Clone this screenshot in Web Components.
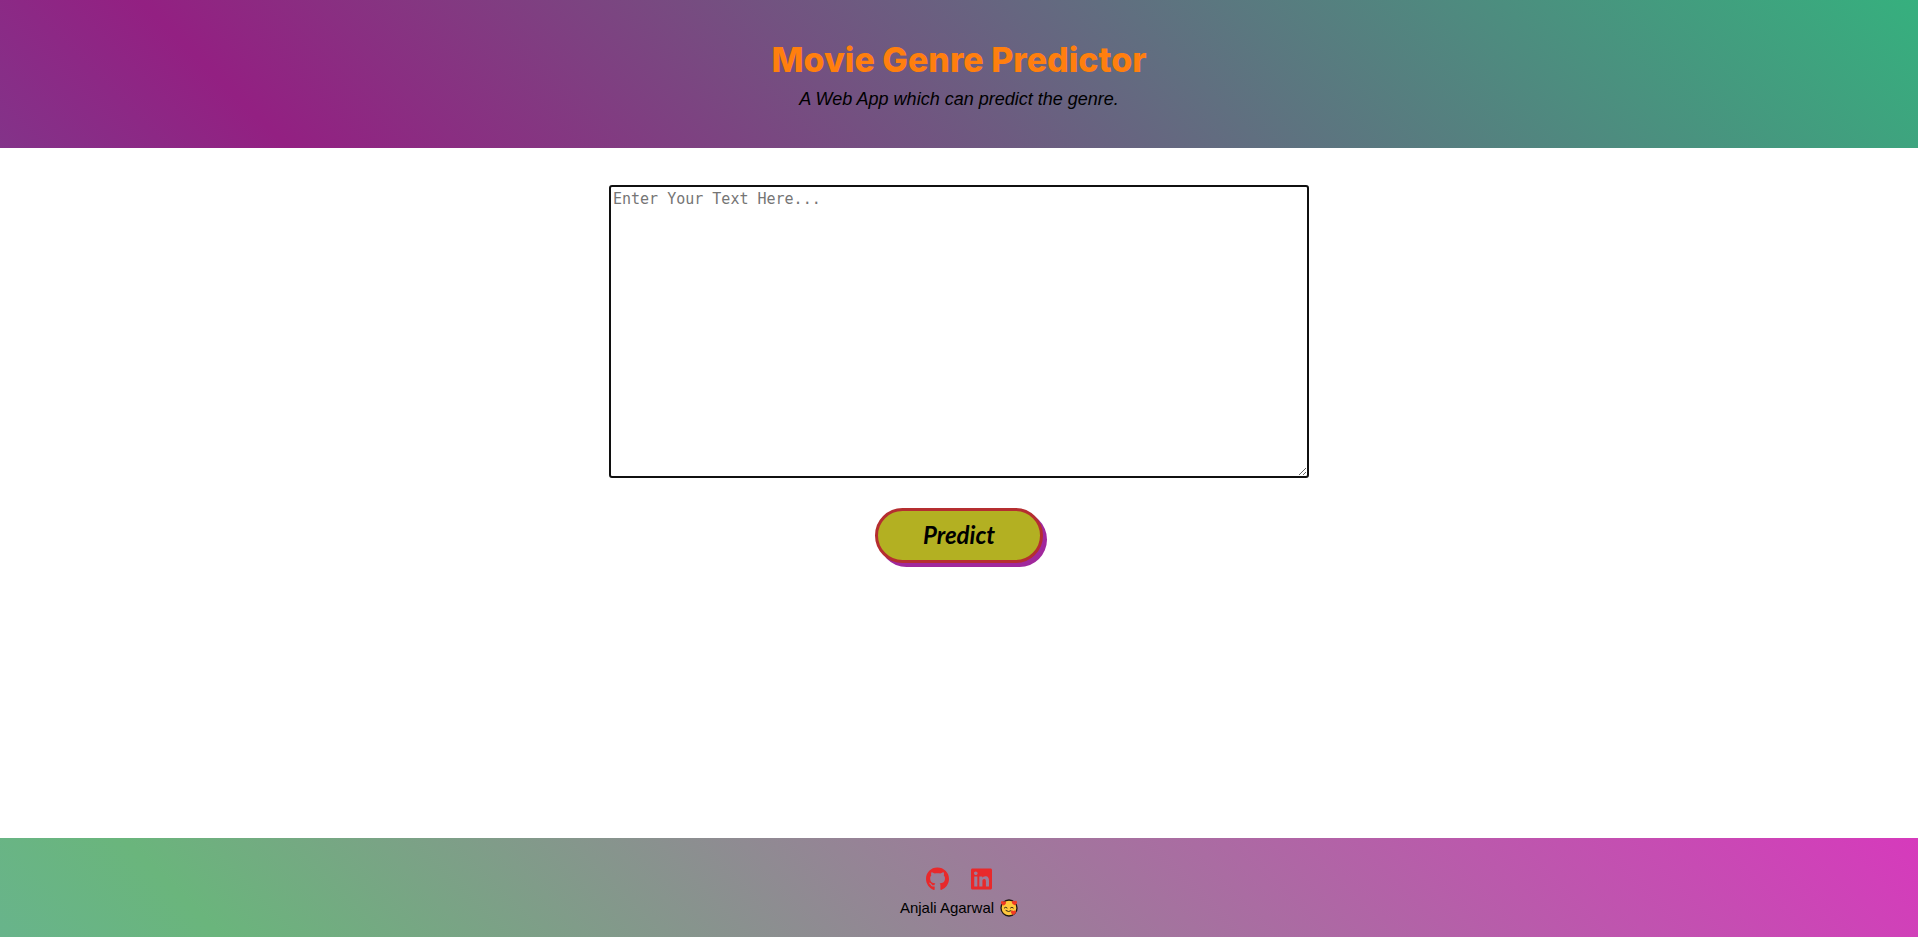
<!DOCTYPE html>
<html lang="en">
<head>
<meta charset="utf-8">
<title>Movie Genre Predictor</title>
<style>
  body {
    margin: 0;
    min-height: 100vh;
    display: flex;
    flex-direction: column;
    background: #fff;
    color: #000;
    font-family: "Liberation Sans", Arial, sans-serif;
  }
  genre-form { flex: 1; }
</style>
</head>
<body>
<page-header>
  <span slot="title">Movie Genre Predictor</span>
  <span slot="tagline">A Web App which can predict the genre.</span>
</page-header>
<genre-form></genre-form>
<page-footer>
  <social-link slot="links" kind="github" label="GitHub"></social-link>
  <social-link slot="links" kind="linkedin" label="LinkedIn"></social-link>
  <span slot="author">Anjali Agarwal</span>
</page-footer>

<script>
class PageHeader extends HTMLElement {
  constructor() {
    super();
    this.attachShadow({ mode: "open" }).innerHTML = `
      <style>
        :host { display: block; }
        header {
          padding: 36px 16px 34px;
          text-align: center;
          background: linear-gradient(45deg, #833389 0%, #932082 14%, #36b07e 100%);
        }
        h1 { margin: 0; font: 800 34px/48px Inter, sans-serif; color: #ff7f0e; }
        p { margin: 0; font-size: 18px; line-height: 30px; font-style: italic; }
      </style>
      <header>
        <h1><slot name="title"></slot></h1>
        <p><slot name="tagline"></slot></p>
      </header>`;
  }
}

class GenreForm extends HTMLElement {
  constructor() {
    super();
    this.attachShadow({ mode: "open" }).innerHTML = `
      <style>
        :host { display: block; }
        form {
          display: flex;
          flex-direction: column;
          align-items: center;
          gap: 30px;
          padding: 37px 16px;
        }
        textarea {
          box-sizing: border-box;
          display: block;
          width: 700px;
          max-width: 100%;
          height: 293px;
          margin: 0;
          padding: 2px;
          border: 2px solid #101010;
          border-radius: 3px;
          outline: none;
          background: #fff;
          font: 15px/20px "DejaVu Sans Mono", monospace;
        }
        textarea::placeholder { color: #757575; }
        button {
          width: 168px;
          height: 55px;
          padding: 0 0 2px;
          border: 3px solid #b52e30;
          border-radius: 28px;
          background: #b3b022;
          box-shadow: 4px 4px #a0289c;
          color: #000;
          font: italic 700 24px/32px Lato, sans-serif;
        }
      </style>
      <form>
        <textarea placeholder="Enter Your Text Here..." aria-label="Plot text"></textarea>
        <button type="button">Predict</button>
      </form>`;
  }
}

const ICONS = {
  github: `<svg width="23" height="24" viewBox="0 0 496 512" aria-hidden="true"><path d="M165.900 397.400c0 2-2.300 3.600-5.200 3.600-3.300.3-5.600-1.300-5.600-3.600 0-2 2.300-3.600 5.200-3.600 3-.3 5.600 1.300 5.600 3.600zm-31.100-4.500c-.7 2 1.300 4.300 4.300 4.900 2.600 1 5.600 0 6.200-2s-1.300-4.300-4.300-5.200c-2.600-.7-5.500.3-6.200 2.300zm44.200-1.700c-2.900.7-4.900 2.600-4.600 4.900.3 2 2.900 3.300 5.900 2.600 2.900-.7 4.900-2.600 4.600-4.600-.3-1.900-3-3.200-5.900-2.900zM244.800 8C106.100 8 0 113.300 0 252c0 110.900 69.800 205.800 169.500 239.200 12.800 2.300 17.300-5.600 17.300-12.100 0-6.200-.3-40.400-.3-61.400 0 0-70 15-84.700-29.800 0 0-11.400-29.100-27.800-36.600 0 0-22.900-15.700 1.600-15.400 0 0 24.900 2 38.600 25.800 21.900 38.600 58.600 27.500 72.900 20.900 2.300-16 8.800-27.100 16-33.700-55.900-6.200-112.300-14.300-112.300-110.500 0-27.500 7.600-41.300 23.600-58.900-2.600-6.500-11.100-33.300 2.600-67.900 20.900-6.500 69 27 69 27 20-5.600 41.500-8.500 62.800-8.500s42.800 2.900 62.800 8.500c0 0 48.100-33.600 69-27 13.700 34.700 5.200 61.400 2.600 67.900 16 17.700 25.800 31.500 25.800 58.900 0 96.500-58.900 104.200-114.800 110.500 9.200 7.900 17 22.900 17 46.400 0 33.700-.3 75.400-.3 83.600 0 6.500 4.600 14.400 17.300 12.100C428.200 457.800 496 362.900 496 252 496 113.300 383.500 8 244.800 8z"/></svg>`,
  linkedin: `<svg width="21" height="24" viewBox="0 0 448 512" aria-hidden="true"><path d="M416 32H31.900C14.300 32 0 46.500 0 64.300v383.400C0 465.500 14.300 480 31.900 480H416c17.600 0 32-14.500 32-32.300V64.300c0-17.800-14.400-32.300-32-32.300zM135.400 416H69V202.200h66.500V416zm-33.200-243c-21.300 0-38.500-17.300-38.500-38.500S80.900 96 102.200 96c21.200 0 38.500 17.300 38.500 38.500 0 21.300-17.200 38.500-38.500 38.500zm282.100 243h-66.400V312c0-24.800-.5-56.700-34.500-56.700-34.600 0-39.900 27-39.900 54.900V416h-66.400V202.200h63.700v29.200h.9c8.900-16.800 30.600-34.500 62.900-34.500 67.200 0 79.700 44.300 79.700 101.900V416z"/></svg>`
};

class SocialLink extends HTMLElement {
  connectedCallback() {
    if (this.shadowRoot) return;
    this.attachShadow({ mode: "open" }).innerHTML = `
      <style>
        :host { display: block; }
        a { display: block; color: #e8292b; }
        svg { display: block; fill: currentColor; }
      </style>
      <a href="#">${ICONS[this.getAttribute("kind")]}</a>`;
    this.shadowRoot.querySelector("a").setAttribute("aria-label", this.getAttribute("label"));
  }
}

class LovedFace extends HTMLElement {
  constructor() {
    super();
    this.attachShadow({ mode: "open" }).innerHTML = `
      <style>
        :host { display: block; }
        svg { display: block; }
      </style>
      <svg width="18" height="18" viewBox="0 0 18 18" role="img" aria-label="Smiling face with hearts">
        <circle cx="9" cy="9" r="8" fill="#ffc83d" stroke="#1b1612" stroke-width="1.300"/>
        <path d="M4.300 8.900q1.400-1.500 2.800 0M10.500 8.900q1.400-1.500 2.800 0M6 11.600q2.700 2 5 .2" fill="none" stroke="#1b1612" stroke-width=".9" stroke-linecap="round"/>
        <g fill="#f03a24">
          <path d="M3.600 6.600C1.600 5.600.6 4.400 1 3.100c.4-1.200 1.900-1.300 2.500-.3.800-1 2.400-.7 2.500.6.100 1.300-1 2.400-2.400 3.200z"/>
          <path d="M14.700 6.300c-2-1-3.100-2.100-2.800-3.500.3-1.200 1.900-1.400 2.500-.4.800-1 2.400-.6 2.600.7.100 1.300-.9 2.400-2.300 3.200z"/>
          <path d="M13.400 15.900c-1.900-1-2.800-2.200-2.400-3.500.4-1.200 1.900-1.300 2.500-.3.800-1 2.400-.6 2.500.7.100 1.200-1.200 2.300-2.600 3.100z"/>
        </g>
      </svg>`;
  }
}

class PageFooter extends HTMLElement {
  constructor() {
    super();
    this.attachShadow({ mode: "open" }).innerHTML = `
      <style>
        :host { display: block; }
        footer {
          padding: 29px 16px 19px;
          background: linear-gradient(45deg, #68b48b 0%, #6ab57c 11%, #d63abc 100%);
        }
        nav, p { display: flex; justify-content: center; margin: 0; }
        nav { gap: 22px; }
        p { align-items: center; gap: 6px; margin-top: 7px; font-size: 15px; line-height: 20px; }
      </style>
      <footer>
        <nav aria-label="Profiles"><slot name="links"></slot></nav>
        <p><slot name="author"></slot><loved-face></loved-face></p>
      </footer>`;
  }
}

customElements.define("page-header", PageHeader);
customElements.define("genre-form", GenreForm);
customElements.define("social-link", SocialLink);
customElements.define("loved-face", LovedFace);
customElements.define("page-footer", PageFooter);
</script>
</body>
</html>
